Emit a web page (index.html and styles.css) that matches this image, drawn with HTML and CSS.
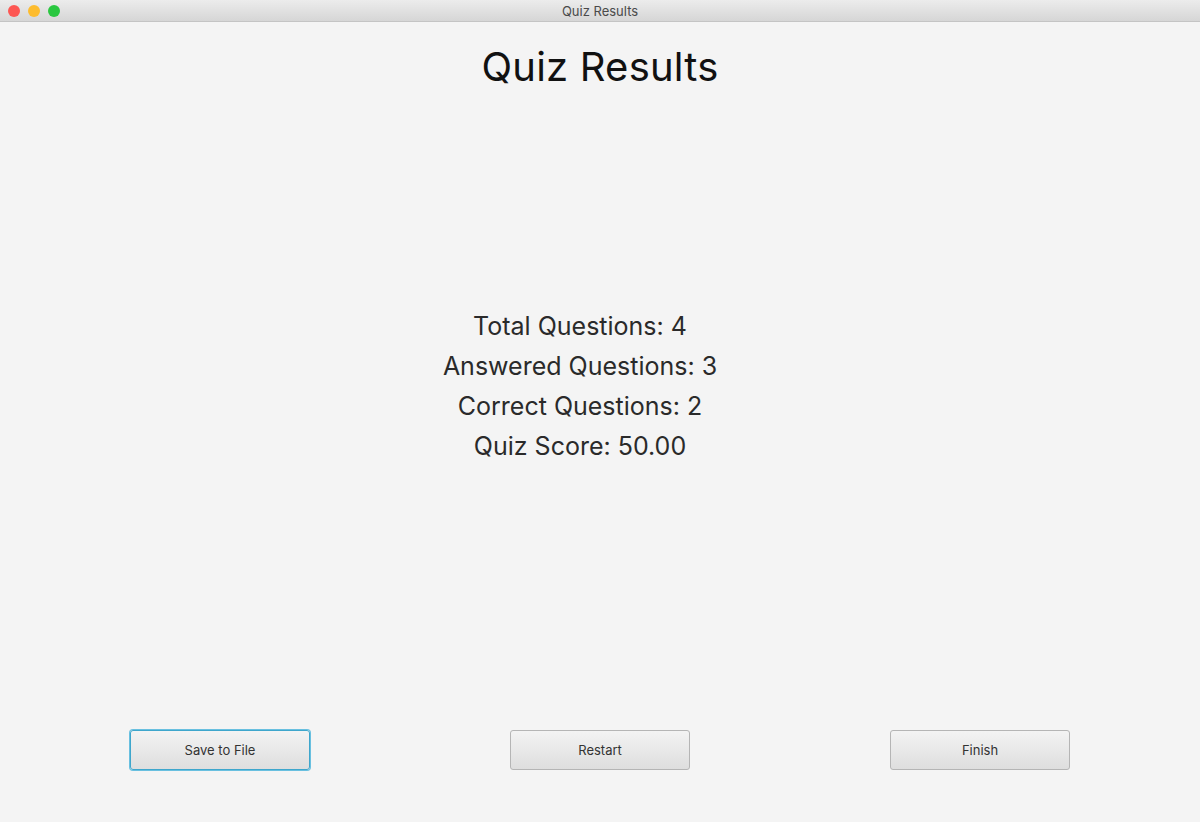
FILE: index.html
```html
<!DOCTYPE html>
<html>
<head>
<meta charset="utf-8">
<link rel="stylesheet" href="styles.css">
</head>
<body>
<div class="window">
  <div class="titlebar">
    <div class="lights">
      <span class="light red"></span>
      <span class="light yellow"></span>
      <span class="light green"></span>
    </div>
    <div class="wintitle">Quiz Results</div>
  </div>
  <div class="content">
    <h1 class="heading">Quiz Results</h1>
    <div class="stats">
      <div class="stat">Total Questions: 4</div>
      <div class="stat">Answered Questions: 3</div>
      <div class="stat">Correct Questions: 2</div>
      <div class="stat">Quiz Score: 50.00</div>
    </div>
    <div class="actions">
      <button class="btn focused">Save to File</button>
      <button class="btn">Restart</button>
      <button class="btn">Finish</button>
    </div>
  </div>
</div>
</body>
</html>
```
FILE: styles.css
```css
html, body {
  margin: 0;
  padding: 0;
  height: 100%;
}
body {
  background: #f4f4f4;
  font-family: Inter, "Liberation Sans", sans-serif;
}
.window {
  height: 822px;
  display: flex;
  flex-direction: column;
  overflow: hidden;
}
.titlebar {
  height: 22px;
  flex: 0 0 22px;
  box-sizing: border-box;
  background: linear-gradient(#ececec, #d6d6d6);
  border-bottom: 1px solid #c4c4c4;
  display: flex;
  align-items: center;
  justify-content: center;
  position: relative;
}
.lights {
  position: absolute;
  left: 8px;
  top: 5px;
  display: flex;
  gap: 8px;
}
.light {
  width: 12px;
  height: 12px;
  border-radius: 50%;
  display: block;
}
.red { background: #fd5753; }
.yellow { background: #fdbc2e; }
.green { background: #2ac740; }
.wintitle {
  font-size: 13px;
  color: #4a4a4a;
}
.content {
  flex: 1;
  display: flex;
  flex-direction: column;
  align-items: center;
}
.heading {
  margin: 21px 0 0;
  font-size: 40px;
  font-weight: 400;
  color: #111;
  line-height: 48px;
  letter-spacing: 0.2px;
}
.stats {
  margin-top: 215px;
  margin-right: 40px;
  display: flex;
  flex-direction: column;
  align-items: center;
}
.stat {
  font-size: 25px;
  line-height: 40px;
  color: #2a2a2a;
}
.actions {
  margin-top: auto;
  margin-bottom: 52px;
  display: flex;
  gap: 200px;
}
.btn {
  width: 180px;
  height: 40px;
  box-sizing: border-box;
  border: 1px solid #b5b5b5;
  border-radius: 3px;
  background: linear-gradient(#f3f3f3, #dedede);
  font-family: Inter, "Liberation Sans", sans-serif;
  font-size: 13px;
  color: #333;
  padding: 0;
}
.btn.focused {
  border: 1px solid #3ea6cc;
  box-shadow: 0 0 0 1px #69c0e0;
}
```
